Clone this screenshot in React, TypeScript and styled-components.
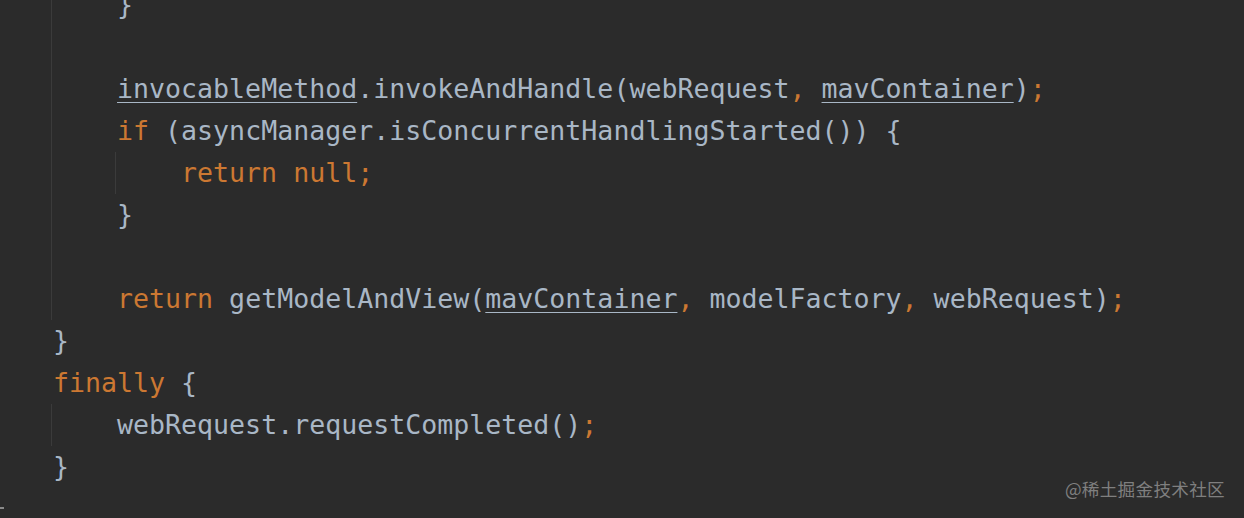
import React from "react";
import styled, { createGlobalStyle } from "styled-components";

const Global = createGlobalStyle`
  html, body { margin: 0; padding: 0; background: #2b2b2b; }
  body { width: 1244px; height: 518px; overflow: hidden; }
`;

const Editor = styled.div`
  position: relative;
  width: 1244px;
  height: 518px;
  overflow: hidden;
  background: #2b2b2b;
  font-family: "DejaVu Sans Mono", "Liberation Mono", monospace;
  font-size: 26.6px;
  color: #a9b7c6;
`;

const Code = styled.div`
  display: flex;
  flex-direction: column;
  margin-top: -16px;
`;

const Line = styled.div`
  display: flex;
  align-items: stretch;
  height: 42px;
  line-height: 42px;
  padding-left: 51px;
  white-space: pre;
`;

const Indent = styled.span<{ $guide?: boolean }>`
  flex: none;
  width: 4ch;
  box-sizing: border-box;
  border-left: 1px solid ${(p) => (p.$guide ? "#3b3b3b" : "transparent")};
`;

const Text = styled.span`
  margin-left: 2px;
`;

const Kw = styled.span`
  color: #cc7832;
`;

const Field = styled.span`
  text-decoration: underline;
  text-decoration-thickness: 1px;
  text-underline-offset: 4px;
`;

const Watermark = styled.div`
  position: absolute;
  right: 19px;
  bottom: 17px;
  font-family: "Noto Sans CJK SC", "Noto Sans", sans-serif;
  font-size: 17.6px;
  color: #7f7f7f;
  letter-spacing: 0.3px;
`;

const Tick = styled.span`
  position: absolute;
  left: 0;
  top: 507px;
  width: 4px;
  height: 2px;
  background: #8a8a8a;
`;

type Row = { guides: boolean[]; content?: React.ReactNode };

const rows: Row[] = [
  { guides: [true], content: "}" },
  { guides: [true] },
  {
    guides: [true],
    content: (
      <>
        <Field>invocableMethod</Field>.invokeAndHandle(webRequest<Kw>,</Kw>{" "}
        <Field>mavContainer</Field>)<Kw>;</Kw>
      </>
    ),
  },
  {
    guides: [true],
    content: (
      <>
        <Kw>if</Kw> (asyncManager.isConcurrentHandlingStarted()) {"{"}
      </>
    ),
  },
  {
    guides: [true, true],
    content: (
      <>
        <Kw>return null;</Kw>
      </>
    ),
  },
  { guides: [true], content: "}" },
  { guides: [true] },
  {
    guides: [true],
    content: (
      <>
        <Kw>return</Kw> getModelAndView(<Field>mavContainer</Field>
        <Kw>,</Kw> modelFactory<Kw>,</Kw> webRequest)<Kw>;</Kw>
      </>
    ),
  },
  { guides: [], content: "}" },
  {
    guides: [],
    content: (
      <>
        <Kw>finally</Kw> {"{"}
      </>
    ),
  },
  {
    guides: [true],
    content: (
      <>
        webRequest.requestCompleted()<Kw>;</Kw>
      </>
    ),
  },
  { guides: [], content: "}" },
  { guides: [] },
];

export default function App() {
  return (
    <Editor>
      <Global />
      <Code>
        {rows.map((r, i) => (
          <Line key={i}>
            {r.guides.map((g, j) => (
              <Indent key={j} $guide={g} />
            ))}
            {r.content !== undefined && <Text>{r.content}</Text>}
          </Line>
        ))}
      </Code>
      <Tick />
      <Watermark>@稀土掘金技术社区</Watermark>
    </Editor>
  );
}
